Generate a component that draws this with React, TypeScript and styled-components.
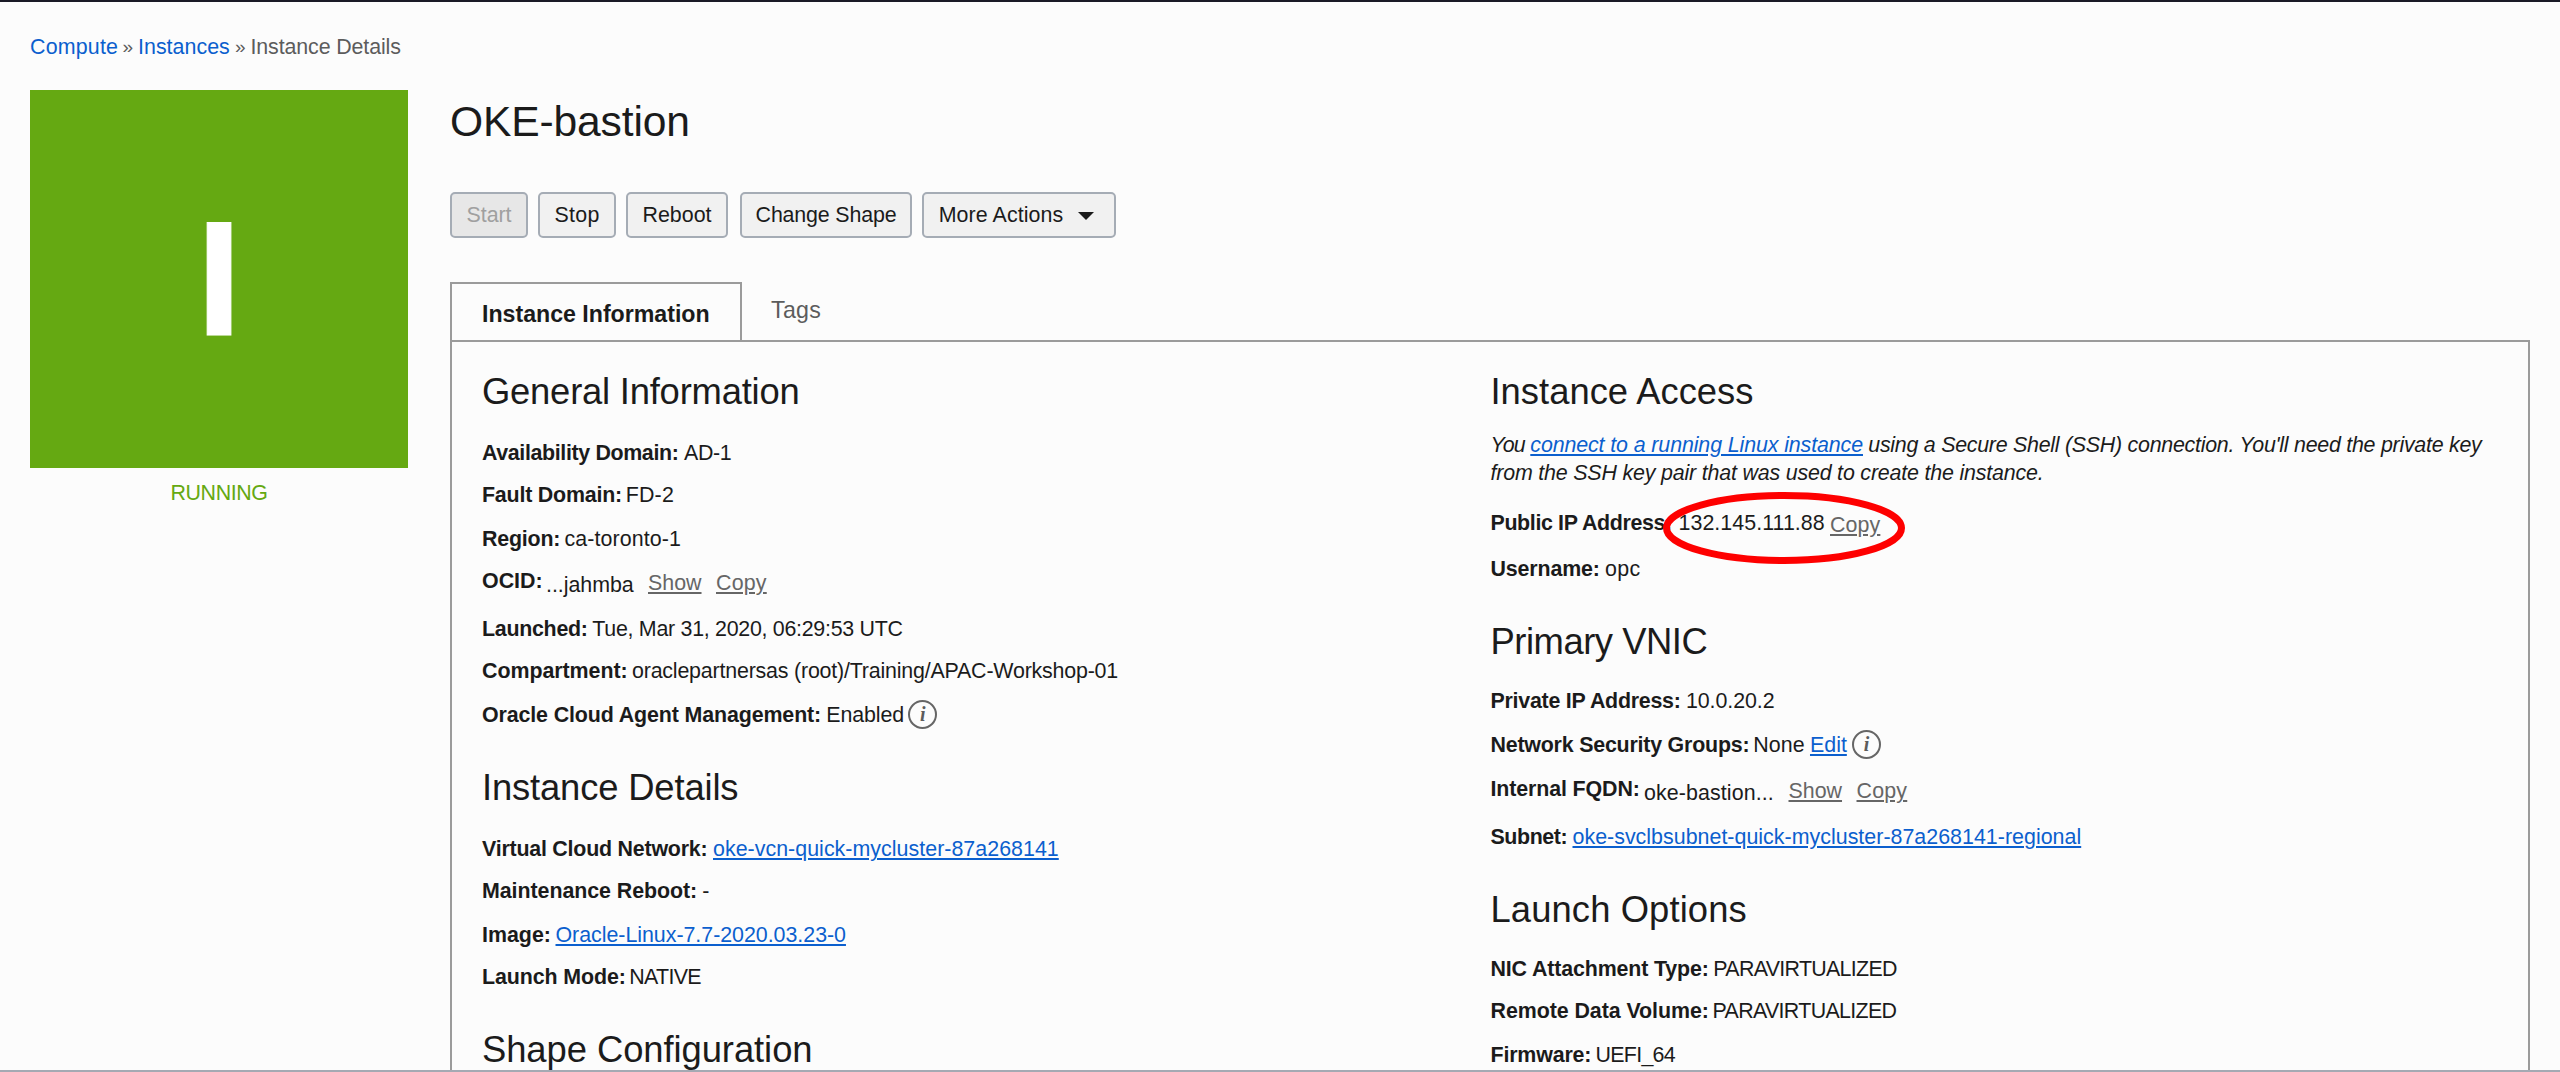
import React from 'react';
import styled, { createGlobalStyle, css } from 'styled-components';

const GlobalStyle = createGlobalStyle`
  *, *::before, *::after { box-sizing: border-box; }
  body {
    margin: 0;
    background: #fcfcfc;
    color: #1b1b1b;
    font-family: "Liberation Sans", Arial, sans-serif;
    font-size: 21.4px;
    line-height: 24px;
  }
  h1, h2, p { margin: 0; font-weight: 400; }
`;

const Page = styled.div`
  height: 1072px;
  padding: 33px 28px 0 30px;
  border-top: 2px solid #1a1a26;
  border-bottom: 2px solid #a5a9b3;
  overflow: hidden;
`;

const Breadcrumb = styled.nav`
  display: flex;
  height: 24px;
  margin-bottom: 31px;
  color: #5c5c5c;
  white-space: pre;
`;

const Crumb = styled.span<{ $ls?: number; $w?: number; $link?: boolean }>`
  letter-spacing: ${p => p.$ls ?? 0}px;
  width: ${p => (p.$w ? `${p.$w}px` : 'auto')};
  color: ${p => (p.$link ? '#0b5fce' : 'inherit')};
`;

const Separator = styled.span`
  width: 15.5px;
  font-size: 19px;
`;

const Body = styled.div`
  display: flex;
  gap: 42px;
`;

const Aside = styled.aside`
  width: 378px;
  flex: none;
`;

const StateTile = styled.div`
  display: flex;
  align-items: center;
  justify-content: center;
  height: 378px;
  background: #65a912;
  color: #fff;
  font-size: 164px;
  line-height: 378px;
  font-weight: 700;
  -webkit-text-stroke: 1px #fff;
`;

const StateLabel = styled.div`
  margin-top: 13px;
  text-align: center;
  color: #65a912;
  letter-spacing: -0.4px;
`;

const Main = styled.main`
  width: 2080px;
  flex: none;
  padding-top: 7px;
`;

const Title = styled.h1`
  font-size: 42.6px;
  line-height: 48px;
  letter-spacing: -0.15px;
`;

const Actions = styled.div`
  display: flex;
  margin: 47px 0 44px;
`;

const ActionButton = styled.button<{ $w: number; $gap?: number; $ls?: number; $menu?: boolean }>`
  display: flex;
  align-items: center;
  justify-content: center;
  gap: 15px;
  width: ${p => p.$w}px;
  height: 46px;
  margin: 0 ${p => p.$gap ?? 10}px 0 0;
  padding: 0 ${p => (p.$menu ? 5 : 0)}px 0 0;
  border: 2px solid #a5acb5;
  border-radius: 5px;
  background: #f1f1f1;
  color: #1b1b1b;
  font: inherit;
  letter-spacing: ${p => p.$ls ?? 0}px;
  white-space: nowrap;
  &:disabled {
    background: #e7e7e7;
    color: #a0a0a0;
  }
`;

const Caret = styled.svg`
  width: 16px;
  height: 8px;
  margin-top: 1px;
  fill: #1b1b1b;
`;

const Tabs = styled.div`
  display: flex;
  height: 58px;
  font-size: 23.2px;
`;

const Tab = styled.div<{ $active?: boolean }>`
  ${p =>
    p.$active
      ? css`
          width: 292px;
          padding: 18px 0 0 30px;
          border: solid #9b9b9b;
          border-width: 2px 2px 0;
          font-weight: 700;
          letter-spacing: -0.02px;
        `
      : css`
          padding: 16px 0 0 29px;
          color: #5c5c5c;
          letter-spacing: 0.3px;
        `}
`;

const Panel = styled.section`
  display: flex;
  height: 760px;
  padding: 28px 0 0 30px;
  border: 2px solid #9b9b9b;
`;

const Column = styled.div<{ $w: number }>`
  width: ${p => p.$w}px;
  flex: none;
`;

const Heading = styled.h2<{ $ls?: number; $gap?: number }>`
  margin-bottom: ${p => (p.$gap ?? 29) - 1}px;
  padding-top: 1px;
  font-size: 36.4px;
  line-height: 42px;
  letter-spacing: ${p => p.$ls ?? 0}px;
`;

const Row = styled.div<{ $h: number }>`
  display: flex;
  align-items: flex-start;
  height: ${p => p.$h}px;
  white-space: nowrap;
`;

const Label = styled.strong<{ $w: number; $ls?: number }>`
  width: ${p => p.$w}px;
  flex: none;
  letter-spacing: ${p => p.$ls ?? 0}px;
`;

const Value = styled.span<{ $ls?: number; $w?: number; $drop?: number }>`
  width: ${p => (p.$w ? `${p.$w}px` : 'auto')};
  flex: none;
  padding-top: ${p => p.$drop ?? 0}px;
  letter-spacing: ${p => p.$ls ?? 0}px;
`;

const underline = css`
  text-decoration: underline;
  text-decoration-thickness: 2px;
  text-underline-offset: 2px;
`;

const Link = styled.a<{ $ls?: number }>`
  ${underline}
  color: #0b5fce;
  letter-spacing: ${p => p.$ls ?? 0}px;
`;

const Toggle = styled.a<{ $ls?: number }>`
  ${underline}
  color: #666;
  letter-spacing: ${p => p.$ls ?? 0}px;
`;

const Note = styled.p`
  margin-bottom: 24px;
  font-style: italic;
  line-height: 28px;
`;

const NoteLine = styled.span<{ $ls?: number }>`
  display: flex;
  white-space: nowrap;
  letter-spacing: ${p => p.$ls ?? 0}px;
`;

const InfoBadge = styled.span`
  display: flex;
  justify-content: center;
  width: 29px;
  height: 29px;
  margin: -3px 0 0 -1px;
  border: 2px solid #666;
  border-radius: 50%;
  color: #5c5c5c;
  font: italic 700 20px/24px "Liberation Serif", serif;
`;

const Circled = styled.div`
  position: relative;
`;

const Marker = styled.svg`
  position: absolute;
  left: 172px;
  top: -19px;
  width: 242px;
  height: 72px;
  fill: none;
  stroke: #fe0000;
  stroke-width: 7px;
`;

export default function App() {
  return (
    <>
      <GlobalStyle />
      <Page>
        <Breadcrumb>
          <Crumb $link $ls={0.2} $w={92.5}>Compute</Crumb>
          <Separator>»</Separator>
          <Crumb $link $ls={0.03} $w={97}>Instances</Crumb>
          <Separator>»</Separator>
          <Crumb $ls={-0.12}>Instance Details</Crumb>
        </Breadcrumb>
        <Body>
          <Aside>
            <StateTile>I</StateTile>
            <StateLabel>RUNNING</StateLabel>
          </Aside>
          <Main>
            <Title>OKE-bastion</Title>
            <Actions>
              <ActionButton disabled $w={78} $ls={-0.07}>Start</ActionButton>
              <ActionButton $w={78} $ls={0.3}>Stop</ActionButton>
              <ActionButton $w={102} $gap={12} $ls={0}>Reboot</ActionButton>
              <ActionButton $w={172} $ls={-0.16}>Change Shape</ActionButton>
              <ActionButton $w={194} $gap={0} $ls={0.08} $menu>
                More Actions
                <Caret viewBox="0 0 16 8"><path d="M0 0H16L8 8Z" /></Caret>
              </ActionButton>
            </Actions>
            <Tabs>
              <Tab $active>Instance Information</Tab>
              <Tab>Tags</Tab>
            </Tabs>
            <Panel>
              <Column $w={1008.5}>
                <Heading $ls={-0.22}>General Information</Heading>
                <Row $h={42}><Label $w={202} $ls={-0.36}>Availability Domain:</Label><Value $ls={-0.33}>AD-1</Value></Row>
                <Row $h={44}><Label $w={143.7} $ls={-0.2}>Fault Domain:</Label><Value $ls={0.2}>FD-2</Value></Row>
                <Row $h={42}><Label $w={82.5} $ls={-0.2}>Region:</Label><Value $ls={0.1}>ca-toronto-1</Value></Row>
                <Row $h={48}>
                  <Label $w={64} $ls={0}>OCID:</Label>
                  <Value $w={102} $drop={4} $ls={-0.03}>...jahmba</Value>
                  <Value $w={68} $drop={2}><Toggle>Show</Toggle></Value>
                  <Value $drop={2}><Toggle $ls={0.2}>Copy</Toggle></Value>
                </Row>
                <Row $h={42}><Label $w={110.3} $ls={-0.28}>Launched:</Label><Value $ls={-0.28}>Tue, Mar 31, 2020, 06:29:53 UTC</Value></Row>
                <Row $h={44}><Label $w={150} $ls={-0.05}>Compartment:</Label><Value $ls={-0.19}>oraclepartnersas (root)/Training/APAC-Workshop-01</Value></Row>
                <Row $h={63}>
                  <Label $w={344.3} $ls={-0.12}>Oracle Cloud Agent Management:</Label>
                  <Value $w={83} $ls={-0.1}>Enabled</Value>
                  <InfoBadge>i</InfoBadge>
                </Row>
                <Heading $ls={-0.16}>Instance Details</Heading>
                <Row $h={42}><Label $w={231} $ls={-0.22}>Virtual Cloud Network:</Label><Link $ls={0.03}>oke-vcn-quick-mycluster-87a268141</Link></Row>
                <Row $h={44}><Label $w={220.3} $ls={-0.06}>Maintenance Reboot:</Label><Value>-</Value></Row>
                <Row $h={42}><Label $w={73.5} $ls={0}>Image:</Label><Link $ls={-0.03}>Oracle-Linux-7.7-2020.03.23-0</Link></Row>
                <Row $h={63}><Label $w={147.3} $ls={-0.1}>Launch Mode:</Label><Value $ls={-0.7}>NATIVE</Value></Row>
                <Heading $ls={-0.07}>Shape Configuration</Heading>
              </Column>
              <Column $w={1030}>
                <Heading $gap={19}>Instance Access</Heading>
                <Note>
                  <NoteLine>
                    <Value $w={39.8} $ls={-0.9}>You</Value>
                    <Value $w={338} $ls={-0.07}><Link $ls={-0.11}>connect to a running Linux instance</Link></Value>
                    <Value $ls={-0.26}>using a Secure Shell (SSH) connection. You'll need the private key</Value>
                  </NoteLine>
                  <NoteLine $ls={-0.18}>from the SSH key pair that was used to create the instance.</NoteLine>
                </Note>
                <Circled>
                  <Row $h={46}>
                    <Label $w={188} $ls={-0.36}>Public IP Address:</Label>
                    <Value $w={151.5} $ls={0.05}>132.145.111.88</Value>
                    <Value $drop={2}><Toggle $ls={0.1}>Copy</Toggle></Value>
                  </Row>
                  <Marker viewBox="0 0 242 72"><ellipse cx="121" cy="36" rx="117.5" ry="32.5" /></Marker>
                </Circled>
                <Row $h={63}><Label $w={114.5} $ls={-0.15}>Username:</Label><Value $ls={0.4}>opc</Value></Row>
                <Heading $ls={-0.47} $gap={27}>Primary VNIC</Heading>
                <Row $h={44}><Label $w={195.4} $ls={-0.26}>Private IP Address:</Label><Value $ls={-0.06}>10.0.20.2</Value></Row>
                <Row $h={44}>
                  <Label $w={262.8} $ls={-0.21}>Network Security Groups:</Label>
                  <Value $w={56.7} $ls={0.1}>None</Value>
                  <Value $w={43}><Link>Edit</Link></Value>
                  <InfoBadge>i</InfoBadge>
                </Row>
                <Row $h={48}>
                  <Label $w={153.5} $ls={-0.12}>Internal FQDN:</Label>
                  <Value $w={144.5} $drop={4} $ls={0.1}>oke-bastion...</Value>
                  <Value $w={68} $drop={2}><Toggle>Show</Toggle></Value>
                  <Value $drop={2}><Toggle $ls={0.2}>Copy</Toggle></Value>
                </Row>
                <Row $h={63}><Label $w={82} $ls={-0.4}>Subnet:</Label><Link $ls={0.02}>oke-svclbsubnet-quick-mycluster-87a268141-regional</Link></Row>
                <Heading $ls={0.1} $gap={27}>Launch Options</Heading>
                <Row $h={42}><Label $w={222.8} $ls={-0.14}>NIC Attachment Type:</Label><Value $ls={-0.68}>PARAVIRTUALIZED</Value></Row>
                <Row $h={44}><Label $w={222} $ls={-0.06}>Remote Data Volume:</Label><Value $ls={-0.66}>PARAVIRTUALIZED</Value></Row>
                <Row $h={42}><Label $w={105} $ls={-0.16}>Firmware:</Label><Value $ls={-0.7}>UEFI_64</Value></Row>
              </Column>
            </Panel>
          </Main>
        </Body>
      </Page>
    </>
  );
}
